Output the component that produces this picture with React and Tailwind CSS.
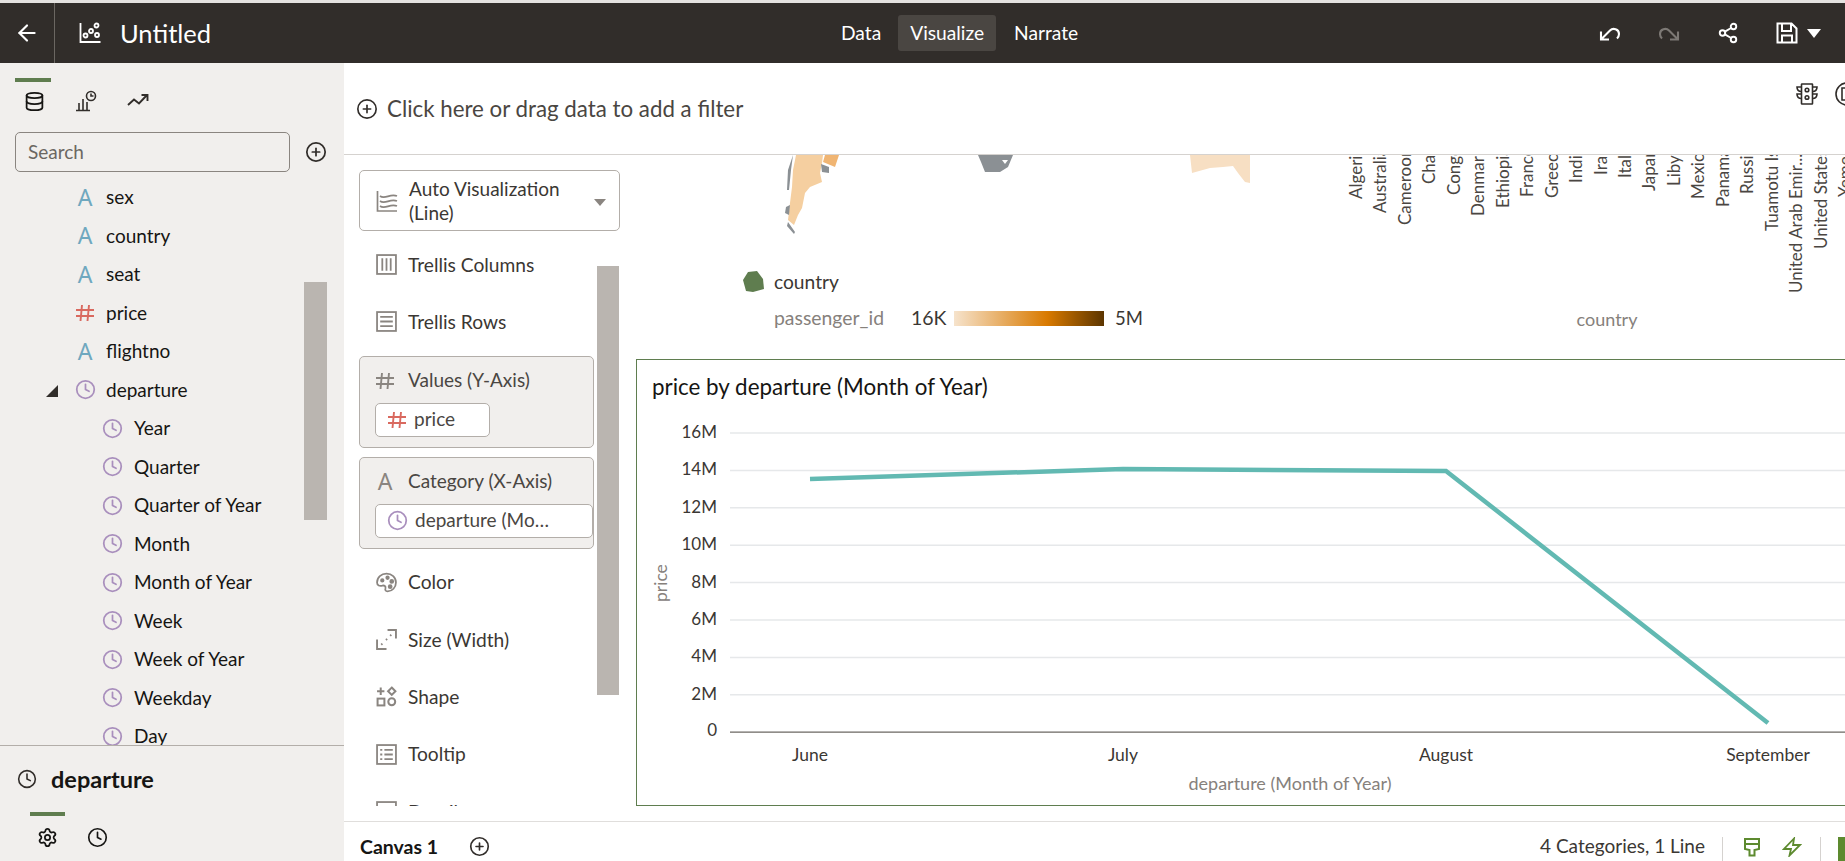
import React from 'react';
import { ArrowLeft, Database, Settings, Clock, CirclePlus, Share2 } from 'lucide-react';

const fields = [
  { type: 'attr', name: 'sex' },
  { type: 'attr', name: 'country' },
  { type: 'attr', name: 'seat' },
  { type: 'num', name: 'price' },
  { type: 'attr', name: 'flightno' },
  { type: 'time', name: 'departure', open: true },
  { type: 'time', name: 'Year', child: true },
  { type: 'time', name: 'Quarter', child: true },
  { type: 'time', name: 'Quarter of Year', child: true },
  { type: 'time', name: 'Month', child: true },
  { type: 'time', name: 'Month of Year', child: true },
  { type: 'time', name: 'Week', child: true },
  { type: 'time', name: 'Week of Year', child: true },
  { type: 'time', name: 'Weekday', child: true },
  { type: 'time', name: 'Day', child: true },
];

const countries = [
  ['Algeria', 199], ['Australia', 213], ['Cameroon', 225], ['Chad', 184], ['Congo', 195],
  ['Denmark', 216], ['Ethiopia', 208], ['France', 197], ['Greece', 198], ['India', 183],
  ['Iran', 175], ['Italy', 178], ['Japan', 191], ['Libya', 186], ['Mexico', 199],
  ['Panama', 207], ['Russia', 194], ['Tuamotu Islands', 231], ['United Arab Emir...', 293],
  ['United States', 249], ['Yemen', 197],
];

const ticks = ['16M', '14M', '12M', '10M', '8M', '6M', '4M', '2M', '0'];

const HashIcon = ({ className }) => (
  <svg viewBox="0 0 20 20" className={className} fill="none" stroke="currentColor" strokeWidth="1.9">
    <path d="M7 2 L5.5 18 M14 2 L12.5 18 M1 7 H19 M1 13 H19" />
  </svg>
);

const AttrIcon = ({ className }) => (
  <span className={`font-['Noto_Sans'] leading-none ${className}`}>A</span>
);

const PurpleClock = () => (
  <Clock className="w-[21px] h-[21px] text-[#a98fbd]" strokeWidth={2} />
);

const FieldIcon = ({ type }) => {
  if (type === 'attr') return <AttrIcon className="text-[23px] text-[#6fa8bf]" />;
  if (type === 'num') return <HashIcon className="w-[20px] h-[20px] text-[#d9695f]" />;
  return <PurpleClock />;
};

const ChartDotsIcon = ({ className }) => (
  <svg viewBox="0 0 22 22" className={className} fill="none" stroke="currentColor" strokeWidth="1.8">
    <path d="M1.5 1 V20 H21.5" />
    <circle cx="6.5" cy="13.5" r="2" />
    <circle cx="12" cy="9" r="2" />
    <circle cx="17.5" cy="3.5" r="2" />
    <circle cx="18" cy="13" r="2" />
  </svg>
);

const SideChartIcon = ({ className }) => (
  <svg viewBox="0 0 22 22" className={className} fill="none" stroke="currentColor" strokeWidth="1.6">
    <path d="M1 20.5 H15 M4 20 V13 M8 20 V9 M12 20 V12" />
    <circle cx="16" cy="6" r="4.5" />
    <path d="M16 3.5 V6 H18.5" />
  </svg>
);

const TrendIcon = ({ className }) => (
  <svg viewBox="0 0 22 22" className={className} fill="none" stroke="currentColor" strokeWidth="1.9">
    <path d="M1 15 L7 9.5 L12 13.5 L20 5 M14.5 5 H20.5 V11" />
  </svg>
);

const UndoIcon = ({ className }) => (
  <svg viewBox="0 0 22 22" className={className} fill="none" stroke="currentColor" strokeWidth="2.1">
    <path d="M2 9.5 V17.5 H10 M2.5 17 L11 8.5 C14 5.5 20 7 20 12 C20 14 19.3 15.3 18 16.5" />
  </svg>
);

const RedoIcon = ({ className }) => (
  <svg viewBox="0 0 22 22" className={className} fill="none" stroke="currentColor" strokeWidth="2.1">
    <path d="M20 9.5 V17.5 H12 M19.5 17 L11 8.5 C8 5.5 2 7 2 12 C2 14 2.7 15.3 4 16.5" />
  </svg>
);

const SaveIcon = ({ className }) => (
  <svg viewBox="0 0 22 22" className={className} fill="none" stroke="currentColor" strokeWidth="2">
    <path d="M1.5 1.5 H15.5 L20.5 6.5 V20.5 H1.5 Z M6 1.5 V9 H15 V1.5 M6 20.5 V13.5 H16 V20.5" />
  </svg>
);

const TrafficIcon = ({ className }) => (
  <svg viewBox="0 0 22 22" className={className} fill="none" stroke="currentColor" strokeWidth="1.6">
    <rect x="5.5" y="1" width="11" height="20" rx="0.5" />
    <circle cx="11" cy="7" r="1.8" />
    <circle cx="11" cy="14.5" r="1.8" />
    <path d="M5.5 4 H1 C1 7 3 8.5 5.5 8.5 M16.5 4 H21 C21 7 19 8.5 16.5 8.5 M5.5 11 H1 C1 14 3 15.5 5.5 15.5 M16.5 11 H21 C21 14 19 15.5 16.5 15.5" />
  </svg>
);

const GrammarIcon = ({ name }) => {
  const cls = 'w-[21px] h-[21px] text-[#8a8580]';
  if (name === 'columns') {
    return (
      <svg viewBox="0 0 20 20" className={cls} fill="none" stroke="currentColor" strokeWidth="1.7">
        <rect x="1" y="1" width="18" height="18" />
        <path d="M6 4 V16 M10 4 V16 M14 4 V16" />
      </svg>
    );
  }
  if (name === 'rows' || name === 'tooltip') {
    return (
      <svg viewBox="0 0 20 20" className={cls} fill="none" stroke="currentColor" strokeWidth="1.7">
        <rect x="1" y="1" width="18" height="18" />
        {name === 'rows'
          ? <path d="M4 5.5 H16 M4 10 H16 M4 14.5 H16" />
          : <path d="M4 5.5 H6 M8 5.5 H16 M4 10 H6 M8 10 H16 M4 14.5 H6 M8 14.5 H16" />}
      </svg>
    );
  }
  if (name === 'color') {
    return (
      <svg viewBox="0 0 20 20" className={cls} fill="none" stroke="currentColor" strokeWidth="1.7">
        <path d="M10 1.5 C15 1.5 19 5 19 10 C19 14.5 15.5 18.5 11 18.5 C9 18.5 8.5 17 9 15.5 C9.5 13.5 8 12.5 6 13 C3.5 13.5 1 13 1 10 C1 5 5 1.5 10 1.5 Z" />
        <circle cx="6" cy="8" r="1.2" fill="currentColor" />
        <circle cx="11" cy="5.5" r="1.2" fill="currentColor" />
        <circle cx="15" cy="9" r="1.4" fill="currentColor" />
        <circle cx="13.5" cy="14" r="1.4" fill="currentColor" />
      </svg>
    );
  }
  if (name === 'size') {
    return (
      <svg viewBox="0 0 20 20" className={cls} fill="none" stroke="currentColor" strokeWidth="1.8">
        <path d="M1 10 V19 H10 M11 1 H19 V9" />
        <path d="M5 15 L7 13 M9.5 10.5 L11 9 M13.5 6.5 L15 5" strokeDasharray="1.5 1.5" />
      </svg>
    );
  }
  return (
    <svg viewBox="0 0 20 20" className={cls} fill="none" stroke="currentColor" strokeWidth="1.9">
      <path d="M1 5 H8 M4.5 1.5 V8.5" />
      <path d="M15 1.5 L18.5 5 L15 8.5 L11.5 5 Z" />
      <rect x="1.5" y="12" width="6.5" height="6.5" />
      <circle cx="15" cy="15" r="3.3" />
    </svg>
  );
};

const GrammarRow = ({ icon, label }) => (
  <div className="h-[57.3px] flex items-center pl-[17px] gap-[11px] text-[19.2px] text-[#3b3733]">
    <GrammarIcon name={icon} />
    <span className="mt-[1px]">{label}</span>
  </div>
);

const DropBox = ({ icon, label, pill, pillIcon, pillClass }) => (
  <div className="h-[92px] w-[235px] rounded-[5px] border border-[#b3aea9] bg-[#f1efed] pl-[15px] pt-[9px]">
    <div className="h-[30px] flex items-center gap-[13px] text-[19px] text-[#4a4642]">
      <span className="w-[20px] flex justify-center">{icon}</span>
      <span>{label}</span>
    </div>
    <div className={`mt-[7px] h-[34px] rounded-[5px] border border-[#b3aea9] bg-white flex items-center pl-[11px] gap-[7px] text-[19px] text-[#4a4642] ${pillClass}`}>
      {pillIcon}
      <span>{pill}</span>
    </div>
  </div>
);

const MapPanel = () => (
  <svg viewBox="620 155 1225 204" className="w-[1225px] h-[204px] block">
    <path d="M796 155 L823 155 L822 163 L820 173 L822 182 L810 187 L805 193 L802 208 L798 215 L794 225 L788 220 L790 203 L792 187 L793 170 Z" fill="#f5cfa0" />
    <path d="M825 155 L839 155 L835 167 L823 162 Z" fill="#f0b573" />
    <path d="M821 164 L829 167 L829 173 L822 172 Z" fill="#8b9094" />
    <path d="M793 155 L791 170 L789 190 L787 190 L788 170 Z M786 207 L790 205 L789 215 L785 213 Z M788 222 L795 232 L794 234 L787 226 Z" fill="#8b9094" />
    <path d="M978 155 L1013 155 L1008 167 L1000 172 L985 172 L981 162 Z" fill="#8b9094" />
    <path d="M1002 160 L1008 160 L1005 164 Z" fill="#ffffff" />
    <path d="M1190 155 L1250 155 L1250 183 L1245 182 L1238 173 L1233 166 L1223 167 L1210 168 L1192 173 Z" fill="#f7dfc3" />
    {countries.map(([name, bottom], i) => (
      <text
        key={name}
        transform={`translate(${1362 + i * 24.45} ${bottom}) rotate(-90)`}
        fontSize="17"
        fill="#4a4642"
      >
        {name}
      </text>
    ))}
    <path d="M748 272 L757 271 L763 279 L764 289 L753 292 L746 291 L743 280 Z" fill="#5f7d4f" />
    <text x="774" y="289" fontSize="19.2" fill="#3b3733">country</text>
    <text x="774" y="325" fontSize="19.4" fill="#86817c">passenger_id</text>
    <text x="911" y="325" fontSize="19.5" fill="#3b3733">16K</text>
    <defs>
      <linearGradient id="legendRamp">
        <stop offset="0" stopColor="#f6e3cc" />
        <stop offset="0.62" stopColor="#d97a00" />
        <stop offset="1" stopColor="#5c3500" />
      </linearGradient>
    </defs>
    <rect x="954" y="311" width="150" height="15" fill="url(#legendRamp)" />
    <text x="1115" y="325" fontSize="18.5" fill="#3b3733">5M</text>
    <text x="1607" y="326" fontSize="18" fill="#86817c" textAnchor="middle">country</text>
  </svg>
);

const LineChart = () => (
  <svg viewBox="637 410 1220 396" className="w-[1220px] h-[396px] block">
    {ticks.map((t, i) => {
      const y = 433 + i * 37.4;
      return (
        <g key={t}>
          <line x1="730" x2="1857" y1={y} y2={y} stroke={i === 8 ? '#6b6762' : '#e6e8ea'} strokeWidth={i === 8 ? 1.2 : 1.5} />
          <text x="717" y={i === 8 ? y + 4 : y + 5} textAnchor="end" fontSize="17" fill="#3b3733">{t}</text>
        </g>
      );
    })}
    <polyline
      points="810,479 1123,469 1446,471 1768,723"
      fill="none"
      stroke="#62b9b2"
      strokeWidth="4.5"
    />
    <text x="810" y="761" textAnchor="middle" fontSize="17.5" fill="#3b3733">June</text>
    <text x="1123" y="761" textAnchor="middle" fontSize="17.5" fill="#3b3733">July</text>
    <text x="1446" y="761" textAnchor="middle" fontSize="17.5" fill="#3b3733">August</text>
    <text x="1768" y="761" textAnchor="middle" fontSize="17.5" fill="#3b3733">September</text>
    <text x="1290" y="790" textAnchor="middle" fontSize="18" fill="#86817c">departure (Month of Year)</text>
    <text transform="translate(667 602) rotate(-90)" fontSize="17.5" fill="#86817c">price</text>
  </svg>
);

const App = () => {
  return (
    <div className="h-screen w-full overflow-hidden flex flex-col bg-white font-['Lato',sans-serif] text-[#161513]">
      <div className="h-[3px] bg-[#e4e2e0] shrink-0" />

      {/* Top header */}
      <header className="h-[60px] shrink-0 bg-[#312d2a] text-white flex items-center relative">
        <div className="w-[55px] h-full border-r border-[#6b6762] flex items-center justify-center">
          <ArrowLeft className="w-[26px] h-[26px]" strokeWidth={2} />
        </div>
        <ChartDotsIcon className="w-[22px] h-[22px] ml-[24px]" />
        <span className="ml-[19px] text-[25.5px]">Untitled</span>

        <nav className="absolute left-[822px] top-[12px] flex items-center text-[19.2px]">
          <span className="pl-[19px] pr-[17px]">Data</span>
          <span className="h-[36px] px-[12px] rounded-[3px] bg-[#4a4642] flex items-center">Visualize</span>
          <span className="px-[18px]">Narrate</span>
        </nav>

        <div className="ml-auto flex items-center pr-[24px]">
          <UndoIcon className="w-[22px] h-[22px]" />
          <RedoIcon className="w-[22px] h-[22px] ml-[37px] text-[#7d7975]" />
          <Share2 className="w-[22px] h-[22px] ml-[37px]" strokeWidth={2.1} />
          <SaveIcon className="w-[22px] h-[22px] ml-[37px]" />
          <span className="ml-[9px] w-0 h-0 border-x-[7px] border-x-transparent border-t-[9px] border-t-white" />
        </div>
      </header>

      <div className="flex-1 flex min-h-0">
        {/* Left data panel */}
        <aside className="w-[344px] shrink-0 bg-[#f1efed] flex flex-col relative">
          <div className="ml-[15px] mt-[15px] w-[36px] h-[4px] bg-[#5f7d4f]" />
          <div className="flex items-center h-[38px] pl-[24px]">
            <Database className="w-[21px] h-[21px]" strokeWidth={2} />
            <SideChartIcon className="w-[22px] h-[22px] ml-[30px] text-[#312d2a]" />
            <TrendIcon className="w-[22px] h-[22px] ml-[30px] text-[#312d2a]" />
          </div>

          <div className="flex items-center mt-[12px] pl-[15px]">
            <div className="w-[275px] h-[40px] rounded-[5px] border border-[#8a8580] flex items-center pl-[12px] text-[19px] text-[#6b6762]">
              Search
            </div>
            <CirclePlus className="w-[22px] h-[22px] ml-[15px] text-[#312d2a]" strokeWidth={1.9} />
          </div>

          <div className="h-[567px] mt-[6px] overflow-hidden relative shrink-0">
            {fields.map((f) => (
              <div key={f.name} className="h-[38.5px] flex items-center relative text-[19px]">
                {f.open && (
                  <span className="absolute left-[46px] top-[14px] w-0 h-0 border-l-[12px] border-l-transparent border-b-[12px] border-b-[#312d2a]" />
                )}
                <span className={`flex justify-center w-[22px] ${f.child ? 'ml-[101px]' : 'ml-[74px]'}`}>
                  <FieldIcon type={f.type} />
                </span>
                <span className={f.child ? 'ml-[11px]' : 'ml-[10px]'}>{f.name}</span>
              </div>
            ))}
            <div className="absolute left-[304px] top-[104px] w-[23px] h-[238px] bg-[#bab5b0]" />
          </div>

          <div className="flex-1 border-t border-[#b3aea9]">
            <div className="flex items-center pl-[17px] pt-[20px] gap-[14px]">
              <Clock className="w-[20px] h-[20px] text-[#312d2a]" strokeWidth={1.9} />
              <span className="text-[23.5px] font-bold leading-[26px]">departure</span>
            </div>
            <div className="ml-[30px] mt-[20px] w-[35px] h-[4px] bg-[#5f7d4f]" />
            <div className="flex items-center pl-[37px] mt-[11px] gap-[29px]">
              <Settings className="w-[21px] h-[21px]" strokeWidth={2} />
              <Clock className="w-[21px] h-[21px]" strokeWidth={1.9} />
            </div>
          </div>
        </aside>

        <main className="flex-1 min-w-0 flex flex-col">
          {/* Filter bar */}
          <div className="h-[92px] shrink-0 border-b border-[#d5d2cf] flex items-center relative overflow-hidden pl-[12px]">
            <CirclePlus className="w-[22px] h-[22px] text-[#312d2a]" strokeWidth={1.8} />
            <span className="ml-[9px] mt-[1px] text-[22.3px] text-[#4a4642]">Click here or drag data to add a filter</span>
            <TrafficIcon className="absolute left-[1452px] top-[20px] w-[22px] h-[22px] text-[#312d2a]" />
            <svg viewBox="0 0 24 24" className="absolute left-[1491px] top-[19px] w-[24px] h-[24px] text-[#312d2a]" fill="none" stroke="currentColor" strokeWidth="1.6">
              <circle cx="12" cy="12" r="11" />
              <path d="M7 6 H15 L18 9 V18 H7 Z M10 10 H15 M10 14 H15" />
            </svg>
          </div>

          <div className="flex-1 flex min-h-0">
            {/* Grammar panel */}
            <section className="w-[276px] shrink-0 h-[651px] overflow-hidden relative pl-[15px]">
              <div className="mt-[15px] w-[261px] h-[61px] rounded-[5px] border border-[#b3aea9] flex items-center pl-[16px] relative">
                <svg viewBox="0 0 22 22" className="w-[22px] h-[22px] text-[#8a8580]" fill="none" stroke="currentColor" strokeWidth="1.7">
                  <path d="M1.5 1 V21 H21 M4 6 C9 10 14 3 21 6 M4 11 C9 15 14 8 21 11 M4 16 C9 20 14 13 21 16" />
                </svg>
                <span className="ml-[11px] w-[175px] text-[19px] leading-[24px] text-[#3b3733]">Auto Visualization (Line)</span>
                <span className="absolute right-[13px] top-[28px] w-0 h-0 border-x-[6px] border-x-transparent border-t-[7px] border-t-[#8a8580]" />
              </div>

              <div className="mt-[5px]">
                <GrammarRow icon="columns" label="Trellis Columns" />
                <GrammarRow icon="rows" label="Trellis Rows" />
              </div>

              <div className="mt-[5px]">
                <DropBox
                  icon={<HashIcon className="w-[20px] h-[20px] text-[#8a8580]" />}
                  label="Values (Y-Axis)"
                  pill="price"
                  pillIcon={<HashIcon className="w-[20px] h-[20px] text-[#d9695f]" />}
                  pillClass="w-[115px]"
                />
              </div>
              <div className="mt-[9px]">
                <DropBox
                  icon={<AttrIcon className="text-[23px] text-[#8a8580]" />}
                  label="Category (X-Axis)"
                  pill="departure (Mo…"
                  pillIcon={<PurpleClock />}
                  pillClass="w-[218px]"
                />
              </div>

              <div className="mt-[5px]">
                <GrammarRow icon="color" label="Color" />
                <GrammarRow icon="size" label="Size (Width)" />
                <GrammarRow icon="shape" label="Shape" />
                <GrammarRow icon="tooltip" label="Tooltip" />
                <GrammarRow icon="rows" label="Detail" />
              </div>

              <div className="absolute left-[253px] top-[111px] w-[22px] h-[429px] bg-[#bab5b0]" />
            </section>

            {/* Canvas */}
            <section className="flex-1 min-w-0 overflow-hidden flex flex-col">
              <MapPanel />
              <div className="ml-[16px] w-[1240px] h-[447px] border border-[#5f7d4f] overflow-hidden shrink-0">
                <div className="h-[50px] pl-[15px] pt-[14px] text-[22.4px] leading-[26px] text-[#161513]">
                  price by departure (Month of Year)
                </div>
                <LineChart />
              </div>
            </section>
          </div>

          {/* Bottom bar */}
          <footer className="h-[40px] shrink-0 border-t border-[#e0dedc] flex items-center pl-[16px] pt-[10px] relative">
            <span className="text-[19.5px] font-bold">Canvas 1</span>
            <CirclePlus className="w-[21px] h-[21px] ml-[31px] text-[#312d2a]" strokeWidth={1.9} />
            <div className="ml-auto flex items-center h-full">
              <span className="text-[19px] text-[#3b3733]">4 Categories, 1 Line</span>
              <span className="ml-[17px] h-[24px] w-px bg-[#d5d2cf] self-end" />
              <svg viewBox="0 0 20 20" className="ml-[19px] w-[20px] h-[20px] text-[#5d8a2f]" fill="none" stroke="currentColor" strokeWidth="2">
                <path d="M3 2 H17 V12 L12.5 13 V18.5 H7.5 V13 L3 12 Z M3 7 H17" />
              </svg>
              <svg viewBox="0 0 20 20" className="ml-[20px] w-[20px] h-[20px] text-[#5d8a2f]" fill="none" stroke="currentColor" strokeWidth="1.8">
                <path d="M12 1.5 L2 12 H9 L7.5 18.5 L18 8 H11 Z" />
              </svg>
              <span className="ml-[18px] h-[24px] w-px bg-[#d5d2cf] self-end" />
              <span className="ml-[17px] w-[7px] h-[24px] bg-[#5d8a2f] self-end" />
            </div>
          </footer>
        </main>
      </div>
    </div>
  );
};

export default App;
